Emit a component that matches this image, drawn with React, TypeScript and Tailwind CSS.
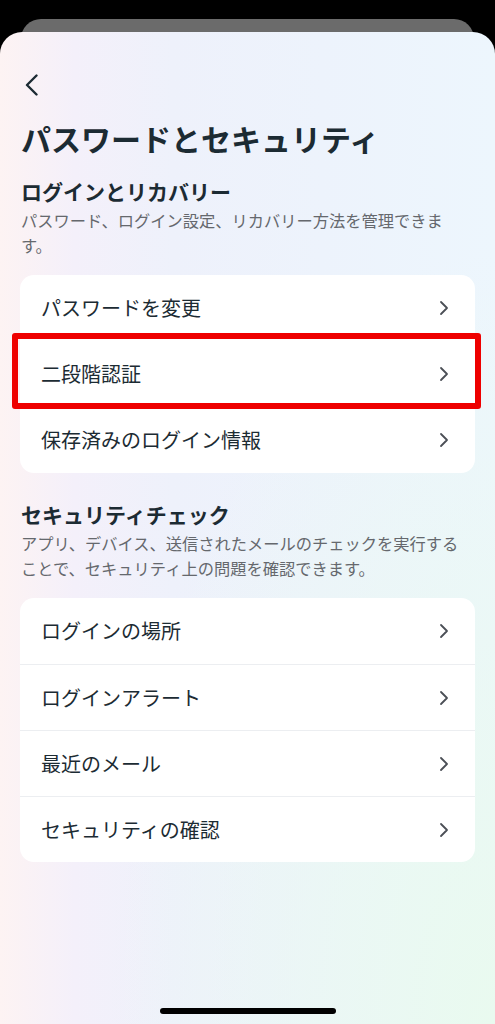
import React from "react";

const Chevron = () => (
  <svg width="10" height="16" viewBox="0 0 10 16" fill="none" className="shrink-0">
    <path d="M2 2 L8 8 L2 14" stroke="#4b4f56" strokeWidth="1.8" strokeLinecap="round" strokeLinejoin="round" />
  </svg>
);

const Row = ({ label, divider }: { label: string; divider?: boolean }) => (
  <div className={`flex h-[66px] items-center justify-between pl-[21px] pr-[26px] ${divider ? "border-t border-[#eceef1]" : ""}`}>
    <span className="text-[20px] leading-[28px] text-[#1c2b33]">{label}</span>
    <Chevron />
  </div>
);

export default function App() {
  return (
    <div
      className="relative flex h-[1024px] w-[495px] flex-col overflow-hidden bg-black"
      style={{ fontFamily: '"Noto Sans CJK JP", "Noto Sans", sans-serif' }}
    >
      <div className="mx-[21px] mt-[19px] h-[40px] shrink-0 rounded-t-[20px] bg-[#6b6b6b]" />
      <div className="relative z-10 -mt-[27px] flex flex-1 flex-col rounded-t-[22px] bg-[radial-gradient(ellipse_at_100%_100%,#e9faef_0%,rgba(233,250,239,0)_55%),linear-gradient(90deg,#fdf3f3_0%,#f4f0fa_15%,#eef1fb_35%,#edf3fc_65%,#edf6fd_100%)] px-[20px]">
        <div className="mt-[42px] pl-[4px]">
          <svg width="16" height="22" viewBox="0 0 16 22" fill="none">
            <path d="M12.5 1.5 L3 11 L12.5 20.5" stroke="#1c2b33" strokeWidth="2.4" strokeLinecap="round" strokeLinejoin="round" />
          </svg>
        </div>
        <h1 className="mt-[24px] pl-px text-[30px] font-bold leading-[36px] text-[#1c2b33]">
          パスワードとセキュリティ
        </h1>

        <h2 className="mt-[21px] pl-px text-[21px] font-bold leading-[28px] text-[#1c2b33]">
          ログインとリカバリー
        </h2>
        <p className="mt-[3px] pl-px text-[16.25px] leading-[25px] text-[#65686d]">
          パスワード、ログイン設定、リカバリー方法を管理できま
          <br />
          す。
        </p>

        <div className="relative mt-[17px] rounded-[14px] bg-white">
          <Row label="パスワードを変更" />
          <Row label="二段階認証" />
          <Row label="保存済みのログイン情報" />
          <div className="pointer-events-none absolute left-[-8px] right-[-6px] top-[58px] h-[76px] rounded-[3px] border-[6px] border-[#ee0000]" />
        </div>

        <h2 className="mt-[27px] pl-px text-[21px] font-bold leading-[28px] text-[#1c2b33]">
          セキュリティチェック
        </h2>
        <p className="mt-[3px] pl-px text-[16.25px] leading-[25px] text-[#65686d]">
          アプリ、デバイス、送信されたメールのチェックを実行する
          <br />
          ことで、セキュリティ上の問題を確認できます。
        </p>

        <div className="mt-[17px] rounded-[14px] bg-white">
          <Row label="ログインの場所" />
          <Row label="ログインアラート" divider />
          <Row label="最近のメール" divider />
          <Row label="セキュリティの確認" divider />
        </div>
      </div>
      <div className="absolute bottom-[10px] left-[160px] z-20 h-[6px] w-[176px] rounded-full bg-black" />
    </div>
  );
}
